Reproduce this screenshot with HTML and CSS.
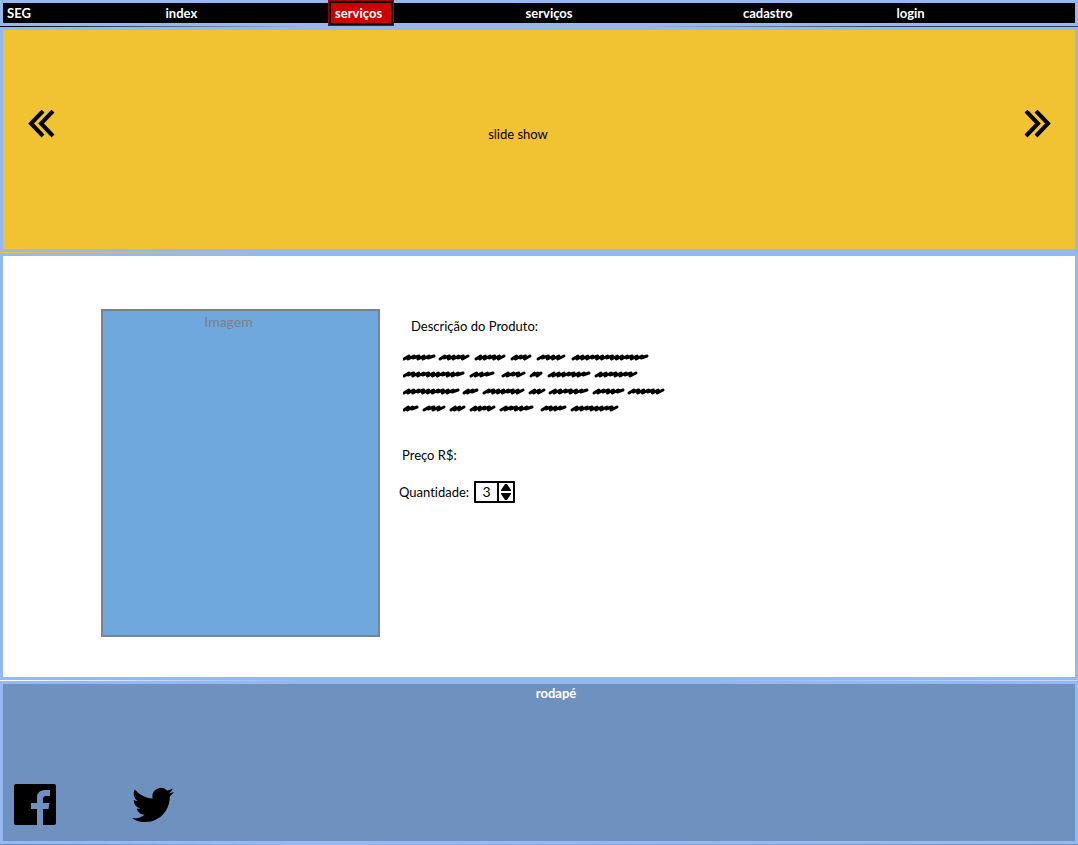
FILE: index.html
```html
<!DOCTYPE html>
<html lang="pt-BR">
<head>
<meta charset="utf-8">
<meta name="viewport" content="width=device-width, initial-scale=1">
<title>SEG - Serviços</title>
<link rel="stylesheet" href="styles.css">
</head>
<body>
<header class="band band-dark">
  <nav class="frame nav">
    <a class="nav-link" href="#">SEG</a>
    <a class="nav-link" href="#">index</a>
    <a class="nav-link nav-active" href="#" aria-current="page">serviços</a>
    <a class="nav-link" href="#">serviços</a>
    <a class="nav-link" href="#">cadastro</a>
    <a class="nav-link" href="#">login</a>
  </nav>
</header>

<section class="band band-yellow">
  <div class="frame slides">
    <button class="arrow" type="button" aria-label="Anterior">
      <svg width="28" height="28" viewBox="0 0 28 28"><path d="M16 1 4 13.500 16 26M26 1 14 13.500 26 26"/></svg>
    </button>
    <p class="slide-title">slide show</p>
    <button class="arrow" type="button" aria-label="Próximo">
      <svg width="28" height="28" viewBox="0 0 28 28"><path d="M3 1 15 13.500 3 26M13 1 25 13.500 13 26"/></svg>
    </button>
  </div>
</section>

<main class="band band-white">
  <div class="frame product">
    <div class="picture">Imagem</div>
    <div class="details">
      <h1 class="label label-title">Descrição do Produto:</h1>
      <svg class="scribble" width="266" height="66" viewBox="0 0 266 66" role="img" aria-label="Descrição"></svg>
      <p class="label label-price">Preço R$:</p>
      <div class="quantity">
        <label class="label" for="qty">Quantidade:</label>
        <span class="stepper">
          <input class="stepper-input" id="qty" type="text" inputmode="numeric" value="3">
          <span class="stepper-buttons">
            <button class="step" type="button" data-step="1" aria-label="Aumentar"><svg width="10" height="7" viewBox="0 0 10 7"><path d="M0 6 2 3 4 0h2l2 3 2 3v1H0z"/></svg></button>
            <button class="step" type="button" data-step="-1" aria-label="Diminuir"><svg width="10" height="7" viewBox="0 0 10 7"><path d="M0 0h10v1L8 4 6 7H4L2 4 0 1z"/></svg></button>
          </span>
        </span>
      </div>
    </div>
  </div>
</main>

<footer class="band band-blue">
  <div class="frame footer">
    <p class="footer-title">rodapé</p>
    <div class="social">
      <a class="social-link" href="#" aria-label="Facebook">
        <svg width="42" height="42" viewBox="0 0 42 42"><path d="M2 0H40Q42 0 42 2V39Q42 41 40 41H29V25H34.500L35.500 19H29V15Q29 12 32 12H36V6H31Q23 6 23 14V19H17V25H23V41H2Q0 41 0 39V2Q0 0 2 0Z"/></svg>
      </a>
      <a class="social-link" href="#" aria-label="Twitter">
        <svg width="42" height="42" viewBox="0 0 24 24"><path d="M23.950 4.570a10 10 0 0 1-2.820.78 4.960 4.960 0 0 0 2.160-2.720c-.95.550-2 .96-3.120 1.180a4.920 4.920 0 0 0-8.380 4.480C7.690 8.100 4.070 6.130 1.640 3.160a4.920 4.920 0 0 0 1.520 6.570 4.900 4.900 0 0 1-2.230-.61v.060a4.920 4.920 0 0 0 3.950 4.830 5 5 0 0 1-2.210.08 4.940 4.940 0 0 0 4.600 3.420A9.870 9.870 0 0 1 0 19.540a14 14 0 0 0 7.550 2.210c9.050 0 14-7.500 14-13.980 0-.21 0-.42-.02-.63a9.940 9.940 0 0 0 2.420-2.570z"/></svg>
      </a>
    </div>
  </div>
</footer>
<script src="script.js"></script>
</body>
</html>
```

FILE: styles.css
```css
* { box-sizing: border-box; }

body {
  margin: 0;
  min-height: 100vh;
  display: flex;
  flex-direction: column;
  font: 14px/18px Lato, "Open Sans", sans-serif;
  font-variant-ligatures: none;
  color: #000;
}

p, h1 { margin: 0; }
button { padding: 0; border: 0; background: none; color: inherit; cursor: pointer; }
svg { display: block; }

.band { padding-bottom: 1px; }
.band-dark { background: linear-gradient(90deg, #000, #95b8f0 28%, #95b8f0 60%, #35425a 82%, #35425a); }
.band-yellow { background: linear-gradient(90deg, #f1c232, #95b8f0 25%); }
.band-white { background: linear-gradient(90deg, #fff, #95b8f0 28%, #95b8f0 65%, #c9dcfa); }
.band-blue { background: linear-gradient(90deg, #5f86bd, #95b8f0 28%, #6f91c0); flex: 1; display: flex; }

.frame { border: 3px solid #95b8f0; }

.nav {
  display: grid;
  grid-template-columns: 159fr 170fr 191fr 218fr 154fr 179fr;
  height: 26px;
  padding: 0 0 2px 4px;
  align-items: center;
  background: #000;
}
.nav-link {
  justify-self: start;
  color: #fff;
  font-size: 13px;
  line-height: 18px;
  font-weight: 700;
  text-decoration: none;
}
.nav-active {
  margin: -3px 0 -4px -7px;
  padding: 1px 9px 1px 4px;
  border: 3px solid #000;
  outline: 1px solid #a00000;
  outline-offset: -1px;
  background: #c00;
}

.slides {
  display: flex;
  justify-content: space-between;
  align-items: flex-start;
  height: 225px;
  padding: 80px 24px 0;
  background: #f1c232;
}
.arrow path { fill: none; stroke: #000; stroke-width: 4; }
.slide-title { padding: 15px 42px 0 0; font-size: 13px; }

.product {
  display: flex;
  align-items: flex-start;
  gap: 19px;
  min-height: 426px;
  padding: 53px 98px 40px;
  background: #fff;
}
.picture {
  flex: 0 1 279px;
  height: 328px;
  padding: 2px 24px 0 0;
  border: 2px solid #7b818e;
  background: #6fa8dc;
  color: #7b818e;
  text-align: center;
}
.details { padding-top: 8px; }
.label { font-size: 13px; font-weight: 400; }
.label-title { padding-left: 12px; }
.scribble { margin: 14px 0 31px 4px; }
.scribble path { fill: none; stroke: #000; stroke-width: 3; stroke-linecap: round; stroke-linejoin: round; }
.label-price { padding-left: 3px; }
.quantity { display: flex; align-items: center; gap: 5px; margin-top: 17px; }

.stepper { display: flex; height: 22px; border: 2px solid #000; border-radius: 1px; }
.stepper-input {
  width: 21px;
  padding: 0;
  border: 0;
  background: #fff;
  font: inherit;
  text-align: center;
}
.stepper-buttons {
  display: flex;
  flex-direction: column;
  justify-content: center;
  gap: 2px;
  padding: 0 2px;
  border-left: 2px solid #000;
}

.footer {
  flex: 1;
  display: flex;
  flex-direction: column;
  justify-content: space-between;
  padding: 0 11px 15px;
  background: #6f91bf;
}
.footer-title { padding-left: 34px; color: #fff; font-size: 13px; font-weight: 700; text-align: center; }
.social { display: flex; gap: 76px; }
```

FILE: script.js
```js
// Start and end of every scribbled word, line by line.
const lines = [
  [[0, 33], [36, 67], [72, 103], [108, 129], [134, 163], [169, 246]],
  [[0, 62], [67, 92], [99, 123], [127, 140], [145, 188], [192, 235]],
  [[0, 57], [60, 76], [80, 122], [126, 143], [146, 186], [190, 222], [225, 262]],
  [[0, 16], [20, 43], [47, 63], [67, 93], [97, 131], [138, 164], [168, 216]]
];

// Height of each stroke's foot: a repeated pattern of deep and shallow turns.
const feet = [2, 1, 2, 2, 1, 2, 2];
const scribble = document.querySelector('.scribble');

lines.forEach((words, row) => {
  const y = 8 + row * 17;
  words.forEach(([start, end], index) => {
    const left = start + 1;
    const right = end - 2;
    const count = Math.max(3, Math.round((right - left) / 5));
    const step = (right - left) / count;
    let d = `M${left} ${y + 2}`;
    for (let i = 0; i < count; i++) {
      const peak = left + (i + 1) * step;
      const foot = feet[(i + index + row) % feet.length];
      d += `L${peak} ${y - 1}`;
      if (i < count - 1) d += `L${peak - step * 0.2} ${y + foot}`;
    }
    const path = document.createElementNS('http://www.w3.org/2000/svg', 'path');
    path.setAttribute('d', d);
    scribble.append(path);
  });
});

const qty = document.getElementById('qty');
document.querySelectorAll('.step').forEach((button) => {
  button.addEventListener('click', () => {
    qty.value = Math.max(0, Number(qty.value) + Number(button.dataset.step));
  });
});
```
